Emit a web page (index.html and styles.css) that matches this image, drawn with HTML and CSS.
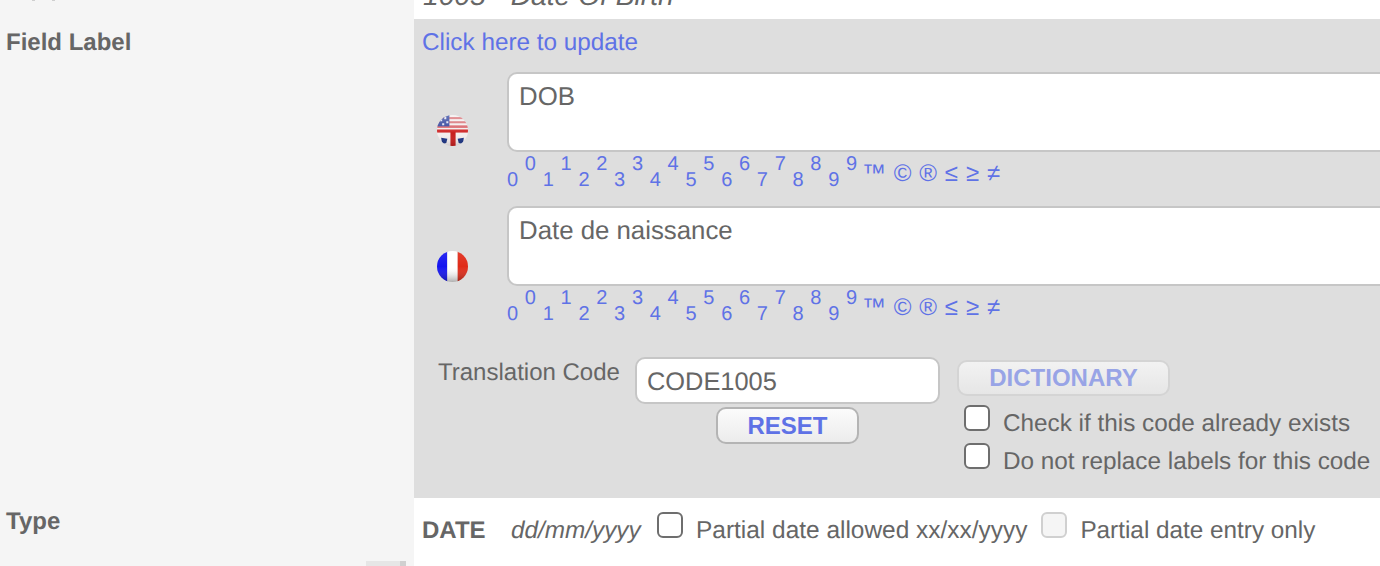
FILE: index.html
```html
<!DOCTYPE html>
<html lang="en">
<head>
    <meta charset="UTF-8">
    <meta name="viewport" content="width=device-width, initial-scale=1.0">
    <title>Edit Field</title>
    <link rel="stylesheet" href="styles.css">
</head>
<body>
    <div class="form">
        <div class="side side-top"><span class="sliver"></span><span class="sliver"></span></div>
        <div class="main main-top"><span class="field-name">1005 - Date Of Birth</span></div>

        <div class="side side-label"><b>Field Label</b></div>
        <div class="main panel">
            <a class="update-link">Click here to update</a>

            <div class="lang-row">
                <svg class="flag flag-us" viewBox="0 0 30 30">
                    <defs>
                        <clipPath id="ballUs"><circle cx="15" cy="15" r="15"/></clipPath>
                        <linearGradient id="shadeUs" x1="0" y1="0" x2="0" y2="1">
                            <stop offset="0" stop-color="#fff" stop-opacity=".25"/>
                            <stop offset=".6" stop-color="#fff" stop-opacity="0"/>
                            <stop offset="1" stop-color="#000" stop-opacity=".15"/>
                        </linearGradient>
                    </defs>
                    <g clip-path="url(#ballUs)">
                        <rect width="30" height="30" fill="#f4eeee"/>
                        <rect y="2" width="30" height="2" fill="#d9757a"/>
                        <rect y="6" width="30" height="2" fill="#d9757a"/>
                        <rect y="10" width="30" height="2.5" fill="#d9666c"/>
                        <rect y="14" width="30" height="3" fill="#d02a2a"/>
                        <rect width="12" height="11" fill="#33479f"/>
                        <path d="M3 4h2v2H3zM7 2h2v2H7zM5 8h2v2H5zM9 6h2v2H9z" fill="#dfe2f2"/>
                        <rect x="13" y="16" width="5" height="14" fill="#c8201f"/>
                        <path d="M4 22l6 1-1 4-4 1zM26 22l-6 1 1 4 4 1z" fill="#1c3484"/>
                        <rect width="30" height="30" fill="url(#shadeUs)"/>
                    </g>
                </svg>
                <div class="lang-field">
                    <div class="text-box">DOB</div>
                    <div class="char-row">
                        <span class="low">0</span><span class="up">0</span><span class="low">1</span><span class="up">1</span><span class="low">2</span><span class="up">2</span><span class="low">3</span><span class="up">3</span><span class="low">4</span><span class="up">4</span><span class="low">5</span><span class="up">5</span><span class="low">6</span><span class="up">6</span><span class="low">7</span><span class="up">7</span><span class="low">8</span><span class="up">8</span><span class="low">9</span><span class="up">9</span><span class="sym">™ © ® ≤ ≥ ≠</span>
                    </div>
                </div>
            </div>

            <div class="lang-row">
                <svg class="flag flag-fr" viewBox="0 0 30 30">
                    <defs>
                        <clipPath id="ballFr"><circle cx="15" cy="15" r="15"/></clipPath>
                        <linearGradient id="shadeFr" x1="0" y1="0" x2="0" y2="1">
                            <stop offset="0" stop-color="#fff" stop-opacity=".1"/>
                            <stop offset=".5" stop-color="#fff" stop-opacity="0"/>
                            <stop offset="1" stop-color="#000" stop-opacity=".32"/>
                        </linearGradient>
                    </defs>
                    <g clip-path="url(#ballFr)">
                        <rect width="10" height="30" fill="#1414f0"/>
                        <rect x="10" width="10" height="30" fill="#fff"/>
                        <rect x="20" width="10" height="30" fill="#e02a18"/>
                        <rect width="30" height="30" fill="url(#shadeFr)"/>
                    </g>
                </svg>
                <div class="lang-field">
                    <div class="text-box">Date de naissance</div>
                    <div class="char-row">
                        <span class="low">0</span><span class="up">0</span><span class="low">1</span><span class="up">1</span><span class="low">2</span><span class="up">2</span><span class="low">3</span><span class="up">3</span><span class="low">4</span><span class="up">4</span><span class="low">5</span><span class="up">5</span><span class="low">6</span><span class="up">6</span><span class="low">7</span><span class="up">7</span><span class="low">8</span><span class="up">8</span><span class="low">9</span><span class="up">9</span><span class="sym">™ © ® ≤ ≥ ≠</span>
                    </div>
                </div>
            </div>

            <div class="code-row">
                <div class="code-label">Translation Code</div>
                <div class="code-col">
                    <div class="code-input">CODE1005</div>
                    <button class="btn btn-reset">RESET</button>
                </div>
                <div class="dict-col">
                    <button class="btn btn-dict">DICTIONARY</button>
                    <label class="check check-first"><span class="box"></span>Check if this code already exists</label>
                    <label class="check check-second"><span class="box"></span>Do not replace labels for this code</label>
                </div>
            </div>
        </div>

        <div class="side side-type">
            <b>Type</b>
            <div class="resize-edge"></div>
        </div>
        <div class="main type-row">
            <b class="type-name">DATE</b>
            <i class="type-format">dd/mm/yyyy</i>
            <span class="box"></span>
            <span class="type-opt type-opt-long">Partial date allowed xx/xx/yyyy</span>
            <span class="box box-off"></span>
            <span class="type-opt">Partial date entry only</span>
        </div>
    </div>
</body>
</html>
```

FILE: styles.css
```css
html, body {
    margin: 0;
    height: 566px;
    overflow: hidden;
    background-color: #fff;
}
body {
    font-family: "Liberation Sans", Arial, sans-serif;
    font-size: 24.3px;
    color: #666;
    text-rendering: geometricPrecision;
}
b, .btn {
    font-size: 24px;
}
.form {
    display: grid;
    grid-template-columns: 414px 966px;
    grid-template-rows: 19px 479px 68px;
    width: 1380px;
    height: 566px;
}
.side {
    background-color: #f5f5f5;
    padding-left: 6px;
    overflow: hidden;
}
.main {
    overflow: hidden;
}
.side-top {
    display: flex;
    gap: 17px;
    padding-left: 32px;
}
.sliver {
    width: 3px;
    height: 1px;
    background-color: #cfcfcf;
}
.main-top {
    padding-left: 9px;
}
.field-name {
    display: block;
    margin-top: -21px;
    font-size: 28.2px;
    font-style: italic;
    white-space: nowrap;
}

/* label panel */
.side-label {
    padding-top: 10px;
}
.panel {
    background-color: #dedede;
    padding: 10px 0 0 8px;
    width: 958px;
}
.update-link {
    display: block;
    color: #5f72e6;
    line-height: 28px;
}
.lang-row {
    display: flex;
    align-items: center;
    margin-top: 16px;
    height: 118px;
}
.update-link + .lang-row {
    margin-top: 15px;
}
.flag {
    width: 31px;
    height: 31px;
    margin: 0 39px 0 15px;
    flex: none;
}
.flag-us {
    margin-top: -2px;
}
.flag-fr {
    margin-top: 2px;
}
.lang-field {
    width: 900px;
    flex: none;
    height: 118px;
}
.text-box {
    box-sizing: border-box;
    height: 80px;
    background-color: #fff;
    border: 2px solid #c6c6c6;
    border-right: 0;
    border-radius: 10px 0 0 10px;
    padding: 8px 10px 0;
    font-size: 25.8px;
    line-height: 30px;
}
.char-row {
    display: flex;
    align-items: flex-start;
    height: 38px;
    font-size: 20px;
    line-height: 22px;
    color: #5f72e6;
}
.char-row span {
    display: block;
    width: 17.85px;
}
.char-row .low {
    margin-top: 17px;
}
.char-row .up {
    margin-top: 1px;
}
.char-row .sym {
    width: auto;
    margin: 11px 0 0 -2px;
    font-size: 24px;
    word-spacing: 1.2px;
    white-space: pre;
}

/* translation code */
.code-row {
    display: flex;
    margin-top: 33px;
}
.code-label {
    width: 197px;
    margin: 2px 0 0 16px;
    flex: none;
    font-size: 24px;
    line-height: 28px;
}
.code-col {
    width: 305px;
    flex: none;
    margin-right: 17px;
}
.code-input {
    box-sizing: border-box;
    height: 47px;
    background-color: #fff;
    border: 2px solid #c6c6c6;
    border-radius: 10px;
    padding: 1px 0 0 10px;
    font-size: 25.4px;
    line-height: 44px;
}
.btn {
    display: block;
    font-family: inherit;
    font-weight: bold;
    padding: 0;
    border-radius: 10px;
    color: #5f72e6;
    background: linear-gradient(#fbfbfb, #ececec);
    border: 2px solid #b4b4b4;
}
.btn-reset {
    width: 143px;
    height: 37px;
    margin: 3px 0 0 81px;
    line-height: 33px;
}
.btn-dict {
    width: 213px;
    height: 36px;
    margin-top: 3px;
    line-height: 32px;
    color: #98a4e6;
    background: linear-gradient(#f2f2f2, #e6e6e6);
    border-color: #d4d4d4;
}
.check {
    display: flex;
    align-items: flex-start;
    line-height: 28px;
    white-space: nowrap;
    margin-left: 7px;
}
.check-first {
    margin-top: 14px;
}
.check-second {
    margin-top: 10px;
}
.box {
    box-sizing: border-box;
    display: block;
    flex: none;
    width: 26px;
    height: 26px;
    background-color: #fff;
    border: 2px solid #6e6e6e;
    border-radius: 6px;
}
.check .box {
    margin: -5px 13px 0 0;
}

/* type */
.side-type {
    position: relative;
    padding-top: 10px;
}
.resize-edge {
    position: absolute;
    right: 8px;
    bottom: 0;
    width: 40px;
    height: 5px;
    background-color: #e6e6e6;
    border-right: 6px solid #d0d0d0;
    box-sizing: border-box;
}
.type-row {
    display: flex;
    align-items: flex-start;
    padding: 18px 0 0 8px;
    line-height: 30px;
    white-space: nowrap;
}
.type-name {
    width: 89px;
}
.type-format {
    width: 146px;
}
.type-row .box {
    margin: -4px 13px 0 0;
}
.type-opt {
    margin-right: 15px;
}
.type-opt-long {
    font-size: 24.45px;
    margin-right: 14px;
}
.box-off {
    background-color: #f5f5f5;
    border-color: #d0d0d0;
}
```
